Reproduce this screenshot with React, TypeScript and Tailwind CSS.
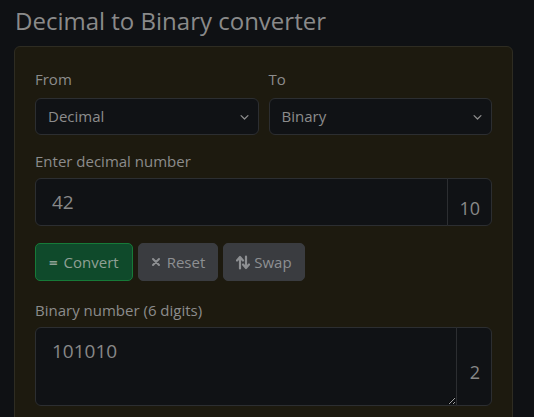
import React from "react";

const Chevron = () => (
  <svg className="pointer-events-none absolute right-[9px] top-1/2 -translate-y-1/2" width="11" height="11" viewBox="0 0 16 16" fill="none">
    <path d="M3 6l5 5 5-5" stroke="#8d8d8d" strokeWidth="1.8" strokeLinecap="round" strokeLinejoin="round" />
  </svg>
);

function Select({ value }: { value: string }) {
  return (
    <div className="relative">
      <select
        defaultValue={value}
        className="block h-[37px] w-full appearance-none rounded-[6px] border border-[#2c2e31] bg-[#101215] pl-3 pr-8 text-[15px] text-[#8c8c8c] outline-none"
      >
        <option>{value}</option>
      </select>
      <Chevron />
    </div>
  );
}

export default function App() {
  return (
    <div
      className="h-[417px] overflow-hidden bg-[#0f1114] pl-[14px] pr-[21px] pt-[4px] [color-scheme:dark]"
      style={{ fontFamily: '"Open Sans", "Noto Sans", sans-serif' }}
    >
      <h1 className="pl-[1px] text-[24px] leading-[34px] text-[#8a8a8a]">Decimal to Binary converter</h1>
      <div className="mt-[8px] min-h-[400px] rounded-[6px] border border-[#2e2c22] bg-[#1d1a0f] p-5">
        <div className="grid grid-cols-2 gap-[10px]">
          <div>
            <div className="mb-[7px] text-[15px] leading-6 text-[#8c8c8c]">From</div>
            <Select value="Decimal" />
          </div>
          <div>
            <div className="mb-[7px] text-[15px] leading-6 text-[#8c8c8c]">To</div>
            <Select value="Binary" />
          </div>
        </div>

        <div className="mt-[14px] mb-[5px] text-[15px] leading-6 text-[#8c8c8c]">Enter decimal number</div>
        <div className="flex h-[48px]">
          <input
            readOnly
            value="42"
            className="min-w-0 flex-1 rounded-l-[6px] border border-[#2c2e31] bg-[#101215] px-4 text-[19px] text-[#888888] outline-none"
          />
          <div className="-ml-px flex w-[45px] items-center justify-end rounded-r-[6px] border border-[#2c2e31] bg-[#101215] pr-[11px] pt-[12px] text-[18px] text-[#888888]">
            10
          </div>
        </div>

        <div className="mt-[17px] flex gap-[5px]">
          <button className="flex h-[38px] items-center gap-[6px] rounded-[5px] border border-[#167a38] bg-[#0f4a2b] px-[13px] text-[15px] text-[#8fa095]">
            <span className="text-[15px] font-bold">=</span>
            <span>Convert</span>
          </button>
          <button className="flex h-[38px] items-center gap-[6px] rounded-[5px] border border-[#3a3c40] bg-[#3a3c40] px-[12px] text-[15px] text-[#8d8f92]">
            <svg width="10" height="10" viewBox="0 0 10 10">
              <path d="M2 2l6 6M8 2l-6 6" stroke="#8d8f92" strokeWidth="2" strokeLinecap="round" />
            </svg>
            <span>Reset</span>
          </button>
          <button className="flex h-[38px] items-center gap-[4px] rounded-[5px] border border-[#3a3c40] bg-[#3a3c40] px-[12px] text-[15px] text-[#8d8f92]">
            <svg width="14" height="15" viewBox="0 0 14 15" fill="none">
              <path d="M4 13.5V2.5M1 5.5l3-3.5 3 3.5" stroke="#8d8f92" strokeWidth="2.2" strokeLinecap="round" strokeLinejoin="round" />
              <path d="M10 1.5v11M7 9.5l3 3.5 3-3.5" stroke="#8d8f92" strokeWidth="2.2" strokeLinecap="round" strokeLinejoin="round" />
            </svg>
            <span>Swap</span>
          </button>
        </div>

        <div className="mt-[17px] mb-[5px] text-[15px] leading-6 text-[#8c8c8c]">Binary number (6 digits)</div>
        <div className="flex h-[79px]">
          <textarea
            readOnly
            value="101010"
            className="min-w-0 flex-1 resize-y rounded-l-[6px] border border-[#2c2e31] bg-[#101215] px-4 py-[8px] text-[19px] leading-[30px] text-[#888888] outline-none"
          />
          <div className="-ml-px flex w-[36px] items-center justify-end rounded-r-[6px] border border-[#2c2e31] bg-[#101215] pr-[11px] pt-[12px] text-[18px] text-[#888888]">
            2
          </div>
        </div>
      </div>
    </div>
  );
}
